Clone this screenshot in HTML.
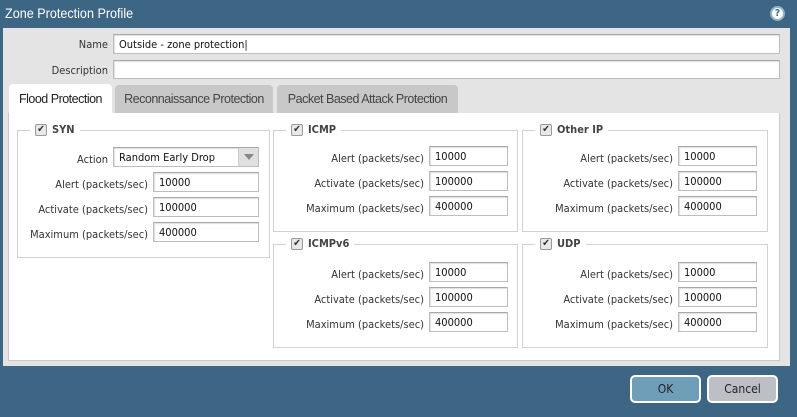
<!DOCTYPE html>
<html><head><meta charset="utf-8"><style>
*{box-sizing:border-box;margin:0;padding:0}
body{width:797px;height:417px;background:#3d6584;font-family:"DejaVu Sans Condensed","Liberation Sans",sans-serif;font-size:11px;color:#222;position:relative;overflow:hidden}
.a{position:absolute}
.title{left:5px;top:5px;color:#fff;font-size:14px;font-family:"Liberation Sans",sans-serif;transform:scaleX(.9);transform-origin:left}
.help{left:770px;top:6px;width:15px;height:15px;border-radius:50%;background:#fff;border:2px solid #8fb3cc;color:#3d6584;font-weight:bold;font-size:10px;text-align:center;line-height:11px}
.panel{left:3px;top:28px;width:787px;height:338px;background:#e4e4e4}
.inp{position:absolute;height:20px;background:#fff;border:1px solid #bdbdbd;border-top-color:#a8a8a8;box-shadow:inset 1px 1px 1px #ddd;padding:3px 0 0 5px;font-size:11px;color:#111;white-space:nowrap}
.lbl{position:absolute;text-align:right;white-space:nowrap;color:#333;margin-top:1px}
.body{left:8px;top:113px;width:772px;height:248px;background:#fff;border:1px solid #c8c8c8;border-top:none}
.tab{position:absolute;top:85px;height:28px;background:#c8c8c8;border-radius:4px 4px 0 0;font-family:"Liberation Sans",sans-serif;font-size:12.5px;color:#444;text-align:center;line-height:28px;letter-spacing:-.5px}
.fs{position:absolute;border:1px solid #d0d0d0}
.lg{position:absolute;top:-8px;left:12px;background:#fff;padding:0 5px;font-weight:bold;font-size:11px;color:#444;line-height:14px;display:flex;align-items:center}
.cb{width:12px;height:12px;border:1px solid #999;background:#e8e8e8;border-radius:2px;margin-right:5px;font-size:10px;line-height:10px;text-align:center;color:#333}
.btn{position:absolute;top:375px;height:28px;width:71px;border:2px solid #fff;border-radius:5px;text-align:center;line-height:24px;font-size:12px;color:#222}
</style></head><body>
<div class="a title">Zone Protection Profile</div>
<div class="a help">?</div>
<div class="a panel"></div>
<div class="lbl" style="left:40px;top:37px;width:68px">Name</div>
<div class="inp" style="left:113px;top:34px;width:667px">Outside - zone protection|</div>
<div class="lbl" style="left:20px;top:63px;width:88px">Description</div>
<div class="inp" style="left:113px;top:60px;width:667px;height:19px"></div>
<div class="a body"></div>
<div class="tab" style="left:9px;width:103px;background:#fff;top:84px;height:30px;color:#222;line-height:30px">Flood Protection</div>
<div class="tab" style="left:115px;width:158px">Reconnaissance Protection</div>
<div class="tab" style="left:277px;width:181px">Packet Based Attack Protection</div>

<div class="fs" style="left:17px;top:130px;width:253px;height:128px"><div class="lg"><div class="cb">✔</div>SYN</div></div>
<div class="lbl" style="left:40px;top:152px;width:68px">Action</div>
<div class="inp" style="left:113px;top:147px;width:146px;background:#fff">Random Early Drop</div>
<div class="a" style="left:238px;top:148px;width:20px;height:18px;background:#e0e0e0;border-left:1px solid #ccc"><div class="a" style="left:5px;top:6px;border-left:5px solid transparent;border-right:5px solid transparent;border-top:6px solid #888"></div></div>

<div class="fs" style="left:273px;top:130px;width:245px;height:102px"><div class="lg"><div class="cb">✔</div>ICMP</div></div>
<div class="fs" style="left:522px;top:130px;width:246px;height:102px"><div class="lg"><div class="cb">✔</div>Other IP</div></div>
<div class="fs" style="left:273px;top:244px;width:245px;height:104px"><div class="lg"><div class="cb">✔</div>ICMPv6</div></div>
<div class="fs" style="left:522px;top:244px;width:246px;height:104px"><div class="lg"><div class="cb">✔</div>UDP</div></div>

<div class="lbl" style="left:0;top:177px;width:148px">Alert (packets/sec)</div>
<div class="inp" style="left:153px;top:172px;width:106px">10000</div>
<div class="lbl" style="left:0;top:202px;width:148px">Activate (packets/sec)</div>
<div class="inp" style="left:153px;top:197px;width:106px">100000</div>
<div class="lbl" style="left:0;top:227px;width:148px">Maximum (packets/sec)</div>
<div class="inp" style="left:153px;top:222px;width:106px">400000</div>

<div class="lbl" style="left:260px;top:151px;width:164px">Alert (packets/sec)</div>
<div class="inp" style="left:429px;top:146px;width:79px">10000</div>
<div class="lbl" style="left:260px;top:176px;width:164px">Activate (packets/sec)</div>
<div class="inp" style="left:429px;top:171px;width:79px">100000</div>
<div class="lbl" style="left:260px;top:201px;width:164px">Maximum (packets/sec)</div>
<div class="inp" style="left:429px;top:196px;width:79px">400000</div>

<div class="lbl" style="left:510px;top:151px;width:163px">Alert (packets/sec)</div>
<div class="inp" style="left:678px;top:146px;width:79px">10000</div>
<div class="lbl" style="left:510px;top:176px;width:163px">Activate (packets/sec)</div>
<div class="inp" style="left:678px;top:171px;width:79px">100000</div>
<div class="lbl" style="left:510px;top:201px;width:163px">Maximum (packets/sec)</div>
<div class="inp" style="left:678px;top:196px;width:79px">400000</div>

<div class="lbl" style="left:260px;top:267px;width:164px">Alert (packets/sec)</div>
<div class="inp" style="left:429px;top:262px;width:79px">10000</div>
<div class="lbl" style="left:260px;top:292px;width:164px">Activate (packets/sec)</div>
<div class="inp" style="left:429px;top:287px;width:79px">100000</div>
<div class="lbl" style="left:260px;top:317px;width:164px">Maximum (packets/sec)</div>
<div class="inp" style="left:429px;top:312px;width:79px">400000</div>

<div class="lbl" style="left:510px;top:267px;width:163px">Alert (packets/sec)</div>
<div class="inp" style="left:678px;top:262px;width:79px">10000</div>
<div class="lbl" style="left:510px;top:292px;width:163px">Activate (packets/sec)</div>
<div class="inp" style="left:678px;top:287px;width:79px">100000</div>
<div class="lbl" style="left:510px;top:317px;width:163px">Maximum (packets/sec)</div>
<div class="inp" style="left:678px;top:312px;width:79px">400000</div>

<div class="btn" style="left:630px;background:#6f9fb8">OK</div>
<div class="btn" style="left:707px;background:#bdbfc7">Cancel</div>
</body></html>
